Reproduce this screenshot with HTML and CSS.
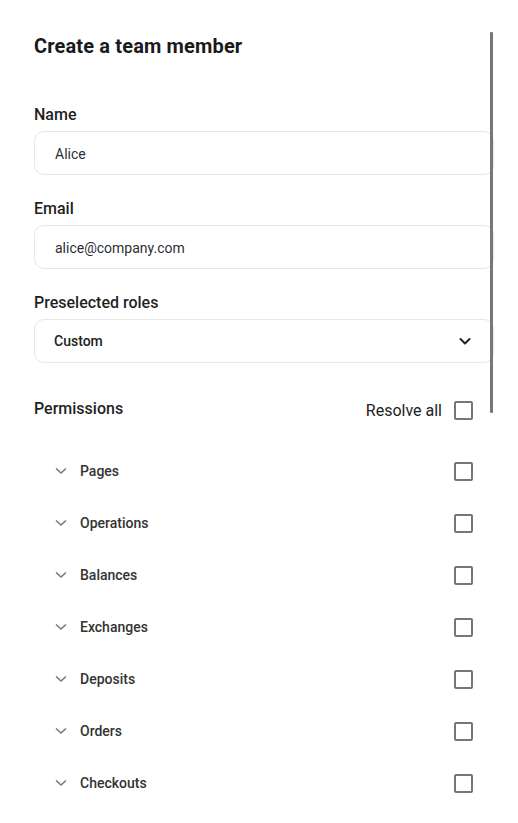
FILE: index.html
```html
<!DOCTYPE html>
<html lang="en">
<head>
  <meta charset="UTF-8"/>
  <meta name="viewport" content="width=device-width, initial-scale=1.0"/>
  <title>Create a team member</title>
  <link rel="stylesheet" href="styles.css">
</head>
<body>

  <!-- Side panel with the member form -->
  <div class="panel">
    <div class="scroll-thumb"></div>

    <h1 class="panel-title">Create a team member</h1>

    <div class="field">
      <label class="field-label" for="name">Name</label>
      <input class="text-input" id="name" type="text" value="Alice">
    </div>

    <div class="field">
      <label class="field-label" for="email">Email</label>
      <input class="text-input" id="email" type="text" value="alice@company.com">
    </div>

    <div class="field">
      <label class="field-label">Preselected roles</label>
      <div class="select-box">
        <span class="select-value">Custom</span>
        <svg class="select-arrow" width="14" height="14" viewBox="0 0 14 14">
          <path d="M2.5 5 L7 9.5 L11.5 5" fill="none" stroke="#1c2433" stroke-width="2" stroke-linecap="round" stroke-linejoin="round"/>
        </svg>
      </div>
    </div>

    <!-- Permissions list -->
    <div class="perm-header">
      <span class="perm-title">Permissions</span>
      <label class="resolve-all">
        Resolve all
        <span class="checkbox"></span>
      </label>
    </div>

    <ul class="perm-list">
      <li class="perm-row">
        <svg class="row-arrow" width="12" height="8" viewBox="0 0 12 8"><path d="M1 1.5 L6 6 L11 1.5" fill="none" stroke="#777" stroke-width="1.6"/></svg>
        <span class="perm-name">Pages</span>
        <span class="checkbox"></span>
      </li>
      <li class="perm-row">
        <svg class="row-arrow" width="12" height="8" viewBox="0 0 12 8"><path d="M1 1.5 L6 6 L11 1.5" fill="none" stroke="#777" stroke-width="1.6"/></svg>
        <span class="perm-name">Operations</span>
        <span class="checkbox"></span>
      </li>
      <li class="perm-row">
        <svg class="row-arrow" width="12" height="8" viewBox="0 0 12 8"><path d="M1 1.5 L6 6 L11 1.5" fill="none" stroke="#777" stroke-width="1.6"/></svg>
        <span class="perm-name">Balances</span>
        <span class="checkbox"></span>
      </li>
      <li class="perm-row">
        <svg class="row-arrow" width="12" height="8" viewBox="0 0 12 8"><path d="M1 1.5 L6 6 L11 1.5" fill="none" stroke="#777" stroke-width="1.6"/></svg>
        <span class="perm-name">Exchanges</span>
        <span class="checkbox"></span>
      </li>
      <li class="perm-row">
        <svg class="row-arrow" width="12" height="8" viewBox="0 0 12 8"><path d="M1 1.5 L6 6 L11 1.5" fill="none" stroke="#777" stroke-width="1.6"/></svg>
        <span class="perm-name">Deposits</span>
        <span class="checkbox"></span>
      </li>
      <li class="perm-row">
        <svg class="row-arrow" width="12" height="8" viewBox="0 0 12 8"><path d="M1 1.5 L6 6 L11 1.5" fill="none" stroke="#777" stroke-width="1.6"/></svg>
        <span class="perm-name">Orders</span>
        <span class="checkbox"></span>
      </li>
      <li class="perm-row">
        <svg class="row-arrow" width="12" height="8" viewBox="0 0 12 8"><path d="M1 1.5 L6 6 L11 1.5" fill="none" stroke="#777" stroke-width="1.6"/></svg>
        <span class="perm-name">Checkouts</span>
        <span class="checkbox"></span>
      </li>
    </ul>
  </div>

</body>
</html>
```

FILE: styles.css
```css
/**********************************************
 *  Base
 **********************************************/
body {
  margin: 0;
  padding: 0;
  background: #fff;
  font-family: Roboto, "Liberation Sans", sans-serif;
  color: #1f1f1f;
}

/**********************************************
 *  Panel
 **********************************************/
.panel {
  position: relative;
  width: 460px;
  padding: 32px 24px 0 34px;
  height: 823px;
  overflow: hidden;
}

/* thin overlay scrollbar on the right side */
.scroll-thumb {
  position: absolute;
  left: 490px;
  top: 32px;
  width: 3px;
  height: 381px;
  background: #777;
  border-radius: 1px;
}

.panel-title {
  margin: 0 0 42px;
  font-size: 20px;
  line-height: 28px;
  font-weight: 700;
  letter-spacing: 0.15px;
  color: #1a1a1a;
}

/**********************************************
 *  Form fields
 **********************************************/
.field {
  display: flex;
  flex-direction: column;
  gap: 4px;
  margin-bottom: 21px;
}

.field-label {
  padding-top: 1px;
  font-size: 16px;
  line-height: 24px;
  font-weight: 500;
  color: #1f1f1f;
}

.text-input {
  box-sizing: border-box;
  width: 460px;
  height: 44px;
  padding: 2px 20px 0;
  border: 1px solid #e6e6e6;
  border-radius: 10px;
  font-family: Roboto, "Liberation Sans", sans-serif;
  font-size: 14px;
  color: #2b2f36;
  outline: none;
}

.select-box {
  box-sizing: border-box;
  width: 460px;
  height: 44px;
  padding: 0 21px 0 19px;
  border: 1px solid #e6e6e6;
  border-radius: 10px;
  display: flex;
  align-items: center;
  justify-content: space-between;
}

.select-value {
  font-size: 14px;
  font-weight: 500;
  color: #222;
}

/**********************************************
 *  Permissions
 **********************************************/
.perm-header {
  display: flex;
  align-items: center;
  justify-content: space-between;
  margin-top: 35px;
  padding-right: 21px;
  height: 24px;
}

.perm-title {
  font-size: 16px;
  font-weight: 500;
  color: #1f1f1f;
  margin-top: -4px;
}

.resolve-all {
  display: flex;
  align-items: center;
  gap: 12px;
  font-size: 16px;
  color: #222;
}

.checkbox {
  box-sizing: border-box;
  width: 19px;
  height: 19px;
  border: 2px solid #767676;
  border-radius: 2px;
  background: #fff;
}

.perm-list {
  list-style: none;
  margin: 23px 0 0;
  padding: 0 21px 0 0;
}

.perm-row {
  display: flex;
  align-items: center;
  height: 52px;
  padding-left: 21px;
}

.row-arrow {
  flex-shrink: 0;
}

.perm-name {
  flex: 1;
  margin-left: 13px;
  font-size: 14px;
  font-weight: 500;
  color: #333;
}
```
